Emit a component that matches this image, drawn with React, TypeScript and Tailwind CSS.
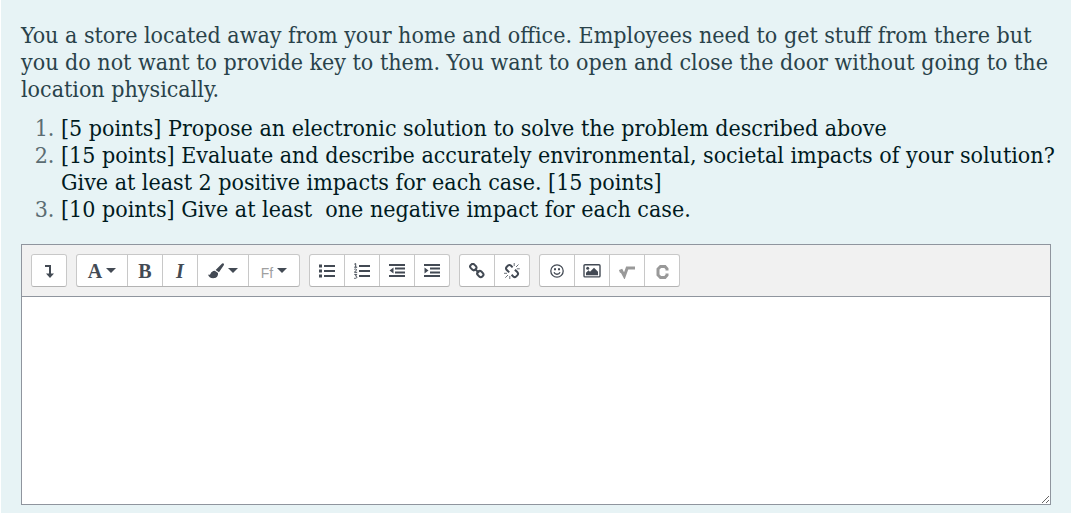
import React from "react";

interface ToolButtonProps {
  label: string;
  menu?: boolean;
  children: React.ReactNode;
}

const Caret: React.FC = () => (
  <svg viewBox="0 0 10 5" className="h-[5px] w-[10px] fill-current">
    <path d="M0 0h10L5 5z" />
  </svg>
);

const ToolButton: React.FC<ToolButtonProps> = ({ label, menu, children }) => (
  <button
    type="button"
    aria-label={label}
    title={label}
    className={`flex h-[31px] items-center justify-center gap-1 bg-white ${
      menu ? "w-[50px]" : "w-[34px]"
    }`}
  >
    {children}
    {menu && <Caret />}
  </button>
);

const ToolGroup: React.FC<{ children: React.ReactNode }> = ({ children }) => (
  <div className="flex gap-px overflow-hidden rounded-[3px] border border-[#c8c8c8] border-b-[#b3b3b3] bg-[#c8c8c8]">
    {children}
  </div>
);

const Glyph: React.FC<{ children: React.ReactNode }> = ({ children }) => (
  <svg
    viewBox="0 0 16 16"
    className="size-4 fill-none stroke-current"
    strokeWidth="2"
  >
    {children}
  </svg>
);

const questions = [
  "[5 points] Propose an electronic solution to solve the problem described above",
  "[15 points] Evaluate and describe accurately environmental, societal impacts of your solution? Give at least 2 positive impacts for each case. [15 points]",
  "[10 points] Give at least \u00a0one negative impact for each case.",
];

const Toolbar: React.FC = () => (
  <div
    role="toolbar"
    className="flex flex-wrap gap-[9px] border-b border-[#8f959e] bg-[#f1f1f1] p-[9px] text-[#434a54]"
  >
    <ToolGroup>
      <ToolButton label="Show more buttons">
        <Glyph>
          <path d="M4 3h5v9" />
          <path d="M5 10.5h8L9 15z" fill="currentColor" stroke="none" />
        </Glyph>
      </ToolButton>
    </ToolGroup>
    <ToolGroup>
      <ToolButton label="Paragraph styles" menu>
        <span className="font-['Liberation_Serif',serif] text-xl font-bold">
          A
        </span>
      </ToolButton>
      <ToolButton label="Bold">
        <span className="font-['Liberation_Serif',serif] text-xl font-bold">
          B
        </span>
      </ToolButton>
      <ToolButton label="Italic">
        <span className="font-['Liberation_Serif',serif] text-xl font-bold italic">
          I
        </span>
      </ToolButton>
      <ToolButton label="Font colour" menu>
        <Glyph>
          <path
            d="M15.5.5c.8.6.5 1.4.1 2.1L11 9.2 7.6 6.9 13.6.9c.6-.6 1.3-.9 1.9-.4z"
            fill="currentColor"
            stroke="none"
          />
          <path
            d="M6.8 7.8l3.2 2.3c.4 3.5-2 5.2-4.8 5.2C2.3 15.3.7 13.6 0 11.5c1 .5 1.8.6 2.4-.6.9-1.9 2.2-3 4.4-3.1z"
            fill="currentColor"
            stroke="none"
          />
        </Glyph>
      </ToolButton>
      <ToolButton label="Font family" menu>
        <span className="pt-1 font-['Liberation_Sans',sans-serif] text-sm text-[#a0a0a0]">
          Ff
        </span>
      </ToolButton>
    </ToolGroup>
    <ToolGroup>
      <ToolButton label="Unordered list">
        <Glyph>
          <path d="M5 3h11M5 8h11M5 13h11" />
          <path d="M0 3h3M0 8h3M0 13h3" strokeWidth="3" />
        </Glyph>
      </ToolButton>
      <ToolButton label="Ordered list">
        <Glyph>
          <path d="M5 3h11M5 8h11M5 13h11" />
          <path
            d="M.3 1.2L1.7.5v3.7M.2 4.2h3M.3 6.4c1-.8 2.5-.4 2.2.6L.4 9.3h2.8M.3 11.4h2.5L1.5 13c1.9 0 1.8 2.4-.1 2.3H.2"
            strokeWidth="1"
          />
        </Glyph>
      </ToolButton>
      <ToolButton label="Outdent">
        <Glyph>
          <path d="M0 2h16M6 5.5h10M6 9.5h10M0 13h16" />
          <path d="M4.5 4.5v6L.5 7.5z" fill="currentColor" stroke="none" />
        </Glyph>
      </ToolButton>
      <ToolButton label="Indent">
        <Glyph>
          <path d="M0 2h16M6 5.5h10M6 9.5h10M0 13h16" />
          <path d="M.5 4.5v6l4-3z" fill="currentColor" stroke="none" />
        </Glyph>
      </ToolButton>
    </ToolGroup>
    <ToolGroup>
      <ToolButton label="Link">
        <Glyph>
          <rect x="-3.2" y="-2.5" width="6.4" height="5" rx="2.2" transform="translate(4.3 4.1) rotate(45)" />
          <rect x="-3.2" y="-2.5" width="6.4" height="5" rx="2.2" transform="translate(11.3 11) rotate(45)" />
          <path d="M5.8 5.7l4.2 4.2" />
        </Glyph>
      </ToolButton>
      <ToolButton label="Unlink">
        <Glyph>
          <path d="M8.6 4.4L6.8 2.6q-1.4-1.2-2.8 0L2.6 4q-1.2 1.4 0 2.8L5.2 9.4M7.6 11.8l1.7 1.7q1.4 1.2 2.8 0l1.4-1.4q1.2-1.4 0-2.8l-2.6-2.6" />
          <path
            d="M10.2 0v3M12 4l2.5-2.5M12.8 5.8h3M0 10.3h3M1.3 14.7L4 12M5.8 13v3"
            strokeWidth="0.8"
          />
        </Glyph>
      </ToolButton>
    </ToolGroup>
    <ToolGroup>
      <ToolButton label="Emoji picker">
        <Glyph>
          <circle cx="8" cy="8" r="6.2" strokeWidth="1.3" />
          <path d="M5 9.2c1 2.7 5 2.7 6 0" strokeWidth="1.3" />
          <path
            d="M5 5.2h2v2H5zM9 5.2h2v2H9z"
            fill="currentColor"
            stroke="none"
          />
        </Glyph>
      </ToolButton>
      <ToolButton label="Insert image">
        <svg
          viewBox="0 0 18 16"
          className="h-4 w-[18px] fill-none stroke-current"
        >
          <rect x="1" y="1.7" width="16" height="12.2" rx="1" strokeWidth="1.4" />
          <path
            d="M3 12.2V9.8l2.5-2.5L7 8.8l4-4 4 4v3.4z"
            fill="currentColor"
            stroke="none"
          />
          <circle cx="4.7" cy="5.2" r="1.5" fill="currentColor" stroke="none" />
        </svg>
      </ToolButton>
      <ToolButton label="Math editor">
        <svg
          viewBox="0 0 16 16"
          className="size-4 fill-none stroke-[#999]"
          strokeWidth="3"
        >
          <path d="M.5 8.5l2-.8L5.3 13 8.2 5H16" />
        </svg>
      </ToolButton>
      <ToolButton label="Chemistry editor">
        <svg
          viewBox="0 0 16 16"
          className="size-4 fill-none stroke-[#999]"
          strokeWidth="3"
        >
          <path d="M13 7.5V5.8L11 3.5H6.5L4 6v6l2.5 2.5H11l2-2.3v-1.7" />
        </svg>
      </ToolButton>
    </ToolGroup>
  </div>
);

const App: React.FC = () => {
  return (
    <div className="min-h-screen bg-white pr-3 pl-px">
      <main className="min-h-screen bg-[#e7f3f5] px-5 pt-[22px] pb-2 font-['Roboto_Slab','DejaVu_Serif_Condensed','DejaVu_Serif',serif] text-[23px] leading-[27px] text-[#001a1e]">
        <p className="mb-3 font-light text-[#29424a]">
          You a store located away from your home and office. Employees need to
          get stuff from there but you do not want to provide key to them. You
          want to open and close the door without going to the location
          physically.
        </p>
        <ol className="-mr-2 mb-[21px] list-decimal pl-10 marker:font-light marker:text-[#5b6c72]">
          {questions.map((question) => (
            <li key={question}>{question}</li>
          ))}
        </ol>
        <div className="border border-[#8f959e] bg-white">
          <Toolbar />
          <textarea
            aria-label="Answer text"
            className="block h-[207px] w-full resize-y bg-white p-2 text-base outline-none"
          />
        </div>
      </main>
    </div>
  );
};

export default App;
